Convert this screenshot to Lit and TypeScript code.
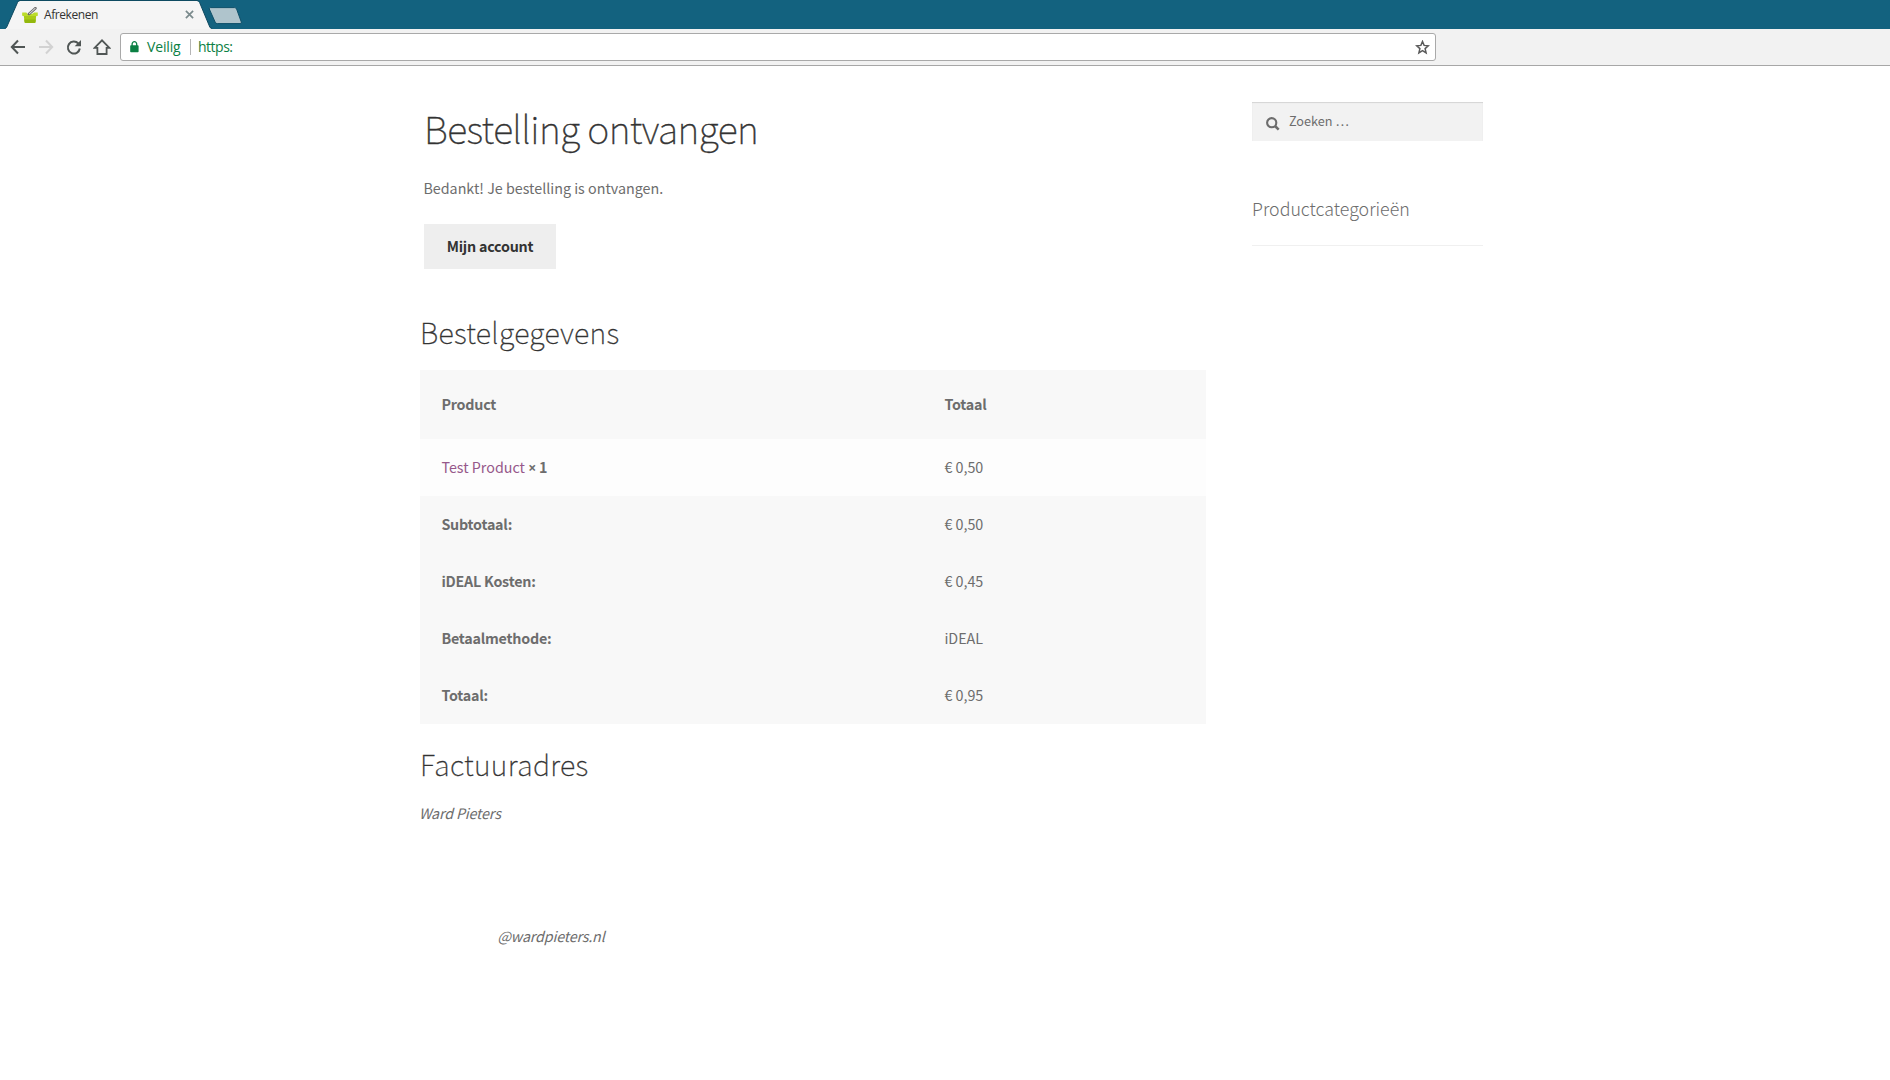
import { LitElement, html, css, svg } from "lit";
import { customElement } from "lit/decorators.js";

interface Row {
  label: string;
  value: string;
}

const TOTALS: Row[] = [
  { label: "Subtotaal:", value: "€ 0,50" },
  { label: "iDEAL Kosten:", value: "€ 0,45" },
  { label: "Betaalmethode:", value: "iDEAL" },
  { label: "Totaal:", value: "€ 0,95" },
];

const basket = svg`
  <path d="M1.600 7h12.800l-.9 8.200q-.2.8-1 .8H3.600q-.8 0-1-.8z" fill="#a9cb16"/>
  <path d="M2.200 12.400h11.600l-.3 2.800q-.2.8-1 .8H3.600q-.8 0-1-.8z" fill="#93b80d"/>
  <path d="M.2 5.400h4.200l1.400 1.800h3.800l2.600-1.600 3.500-.2.200 2.800q0 .8-.8.8H1q-.8 0-.9-.8z" fill="#bcdc2c"/>
  <path d="M7 7 13.400 1.200" stroke="#666" stroke-width="2.600" stroke-linecap="round"/>
  <path d="M7.400 6.600 13.100 1.400" stroke="#d0d0d0" stroke-width="1.100" stroke-linecap="round"/>`;

@customElement("browser-chrome")
export class BrowserChrome extends LitElement {
  static styles = css`
    :host {
      display: block;
      font-family: "Open Sans", "Noto Sans", sans-serif;
    }
    svg {
      display: block;
      flex: none;
    }
    .strip {
      display: flex;
      height: 29px;
      background: #13627f;
      box-sizing: border-box;
    }
    .tab {
      display: grid;
      width: 207px;
      height: 29px;
      margin-left: 5px;
    }
    .tab > * {
      grid-area: 1 / 1;
    }
    .tab-content {
      display: flex;
      align-items: center;
      padding: 0 18px 0 17px;
      height: 29px;
      box-sizing: border-box;
      z-index: 1;
    }
    .title {
      flex: 1;
      margin-left: 6px;
      font-size: 12px;
      line-height: 29px;
      letter-spacing: -0.42px;
      color: #333;
    }
    .new-tab {
      margin: 7px 0 0 -4px;
    }
    .toolbar {
      display: flex;
      align-items: center;
      height: 37px;
      padding: 0 0 0 9px;
      box-sizing: border-box;
      border-bottom: 1px solid #a7a7a7;
      background: #f2f2f2;
    }
    .nav {
      display: flex;
      gap: 10px;
      width: 111px;
      flex: none;
    }
    .home {
      margin-left: 1px;
    }
    .omnibox {
      display: flex;
      align-items: center;
      width: 1316px;
      height: 28px;
      box-sizing: border-box;
      border: 1px solid #a9a9a9;
      border-radius: 3px;
      background: #fff;
      padding: 0 5px 0 9px;
      font-size: 14px;
      line-height: 26px;
      color: #0b8043;
    }
    .secure {
      margin-left: 8px;
      width: 43px;
      letter-spacing: -0.15px;
    }
    .divider {
      width: 1px;
      height: 16px;
      background: #b5b5b5;
      margin-right: 7px;
    }
    .url {
      flex: 1;
      letter-spacing: -0.5px;
    }
  `;

  render() {
    return html`
      <div class="strip">
        <div class="tab">
          <svg width="207" height="29" viewBox="0 0 207 29">
            <path d="M0 29 1.500 27.500 12.500 2.500Q13 1 15 1H192Q194 1 194.600 2.500L205 27.500 207 29z" fill="#f5f5f5" />
            <path d="M0 28.500 1.500 27.500 12.500 2.500Q13 .5 15 .5H192Q194 .5 194.600 2.500L205 27.500 207 28.500" fill="none" stroke="#0e4a61" />
          </svg>
          <div class="tab-content">
            <svg width="16" height="16" viewBox="0 0 16 16">${basket}</svg>
            <span class="title">Afrekenen</span>
            <svg width="9" height="9" viewBox="0 0 9 9">
              <path d="M.9.9 8.100 8.100M8.100.9.9 8.100" stroke="#7a8a8c" stroke-width="1.700" />
            </svg>
          </div>
        </div>
        <svg class="new-tab" width="35" height="18" viewBox="0 0 35 18">
          <path d="M2.200.6H26.500Q28 .6 28.600 2L33.300 15Q33.800 16.600 32.200 16.600H9.300Q7.800 16.600 7.200 15.200L1.300 2Q.8.600 2.200.6z"
            fill="#afc4cc" stroke="#0e4f68" />
        </svg>
      </div>
      <div class="toolbar">
        <div class="nav">
          <svg width="17" height="18" viewBox="0 0 17 18">
            <path d="M9 2.500 2.800 9 9 15.500M3 9H16" fill="none" stroke="#505655" stroke-width="2" />
          </svg>
          <svg width="18" height="18" viewBox="0 0 18 18">
            <path d="M10 2.500 16.200 9 10 15.500M16 9H3" fill="none" stroke="#d2d2d2" stroke-width="2" />
          </svg>
          <svg width="18" height="18" viewBox="0 0 18 18">
            <path d="M14.300 5.500A6 6 0 1 0 15.800 10.500" fill="none" stroke="#505655" stroke-width="2" />
            <path d="M17 2V8.300H10.700z" fill="#505655" />
          </svg>
          <svg class="home" width="18" height="18" viewBox="0 0 18 18">
            <path d="M1.600 9.800 9 2.300 16.400 9.800H13.600V16H4.400V9.800z" fill="none" stroke="#505655" stroke-width="1.800" />
          </svg>
        </div>
        <div class="omnibox">
          <svg width="9" height="12" viewBox="0 0 9 12">
            <rect x=".2" y="4.300" width="8.400" height="7" rx=".8" fill="#0b8043" />
            <path d="M2.100 5V3a2.300 2.300 0 0 1 4.600 0V5" fill="none" stroke="#0b8043" stroke-width="1.300" />
          </svg>
          <span class="secure">Veilig</span>
          <span class="divider"></span>
          <span class="url">https:</span>
          <svg width="15" height="15" viewBox="0 0 15 15">
            <path d="M7.500 1.500 9.100 5.400 13.300 5.800 10.100 8.600 11.100 12.800 7.500 10.600 3.900 12.800 4.900 8.600 1.700 5.800 5.900 5.400z"
              fill="none" stroke="#5a5a5a" stroke-width="1.500" />
          </svg>
        </div>
      </div>
    `;
  }
}

@customElement("order-table")
export class OrderTable extends LitElement {
  static styles = css`
    :host {
      display: block;
    }
    .row {
      display: grid;
      grid-template-columns: 503px 1fr;
      height: 57px;
      box-sizing: border-box;
      padding-left: 21.4px;
      background: #f8f8f8;
      line-height: 56px;
    }
    .head {
      height: 69px;
      line-height: 67px;
    }
    .item {
      background: #fdfdfd;
    }
    .bold {
      font-weight: 700;
      letter-spacing: -0.22px;
    }
    .times {
      font-family: "Open Sans", sans-serif;
      font-size: 14px;
      line-height: 1;
    }
    .link {
      color: #96588a;
    }
  `;

  render() {
    return html`
      <div class="row head">
        <span class="bold">Product</span><span class="bold">Totaal</span>
      </div>
      <div class="row item">
        <span><span class="link">Test Product</span> <span class="bold"><span class="times">×</span> 1</span></span>
        <span>€ 0,50</span>
      </div>
      ${TOTALS.map(
        (r) => html`<div class="row">
          <span class="bold">${r.label}</span><span>${r.value}</span>
        </div>`
      )}
    `;
  }
}

@customElement("app-root")
export class AppRoot extends LitElement {
  static styles = css`
    :host {
      display: block;
      height: 1080px;
      overflow: hidden;
      background: #fff;
      color: #6d6d6d;
      font-family: "Noto Sans CJK JP", sans-serif;
      font-size: 14.3px;
    }
    .page {
      display: flex;
      padding-left: 420px;
    }
    .main {
      width: 786px;
      margin-right: 46px;
      padding-top: 34px;
    }
    .intro {
      padding-left: 4px;
    }
    h1,
    h2,
    h3,
    p {
      margin: 0;
      font-weight: 100;
      white-space: nowrap;
    }
    h1 {
      font-size: 37.5px;
      line-height: 56px;
      letter-spacing: -0.54px;
      color: #333;
      -webkit-text-stroke: 0.4px #333;
    }
    p {
      font-weight: 400;
      line-height: 26px;
      margin: 19px 0 0 -0.6px;
    }
    .button {
      display: inline-block;
      height: 45px;
      width: 132px;
      margin-top: 23px;
      background: #eee;
      color: #333;
      font-weight: 700;
      letter-spacing: -0.22px;
      line-height: 44px;
      text-align: center;
    }
    h2 {
      font-size: 28.7px;
      line-height: 40px;
      letter-spacing: 0.33px;
      color: #333;
      -webkit-text-stroke: 0.35px #333;
    }
    .order-title {
      margin: 43px 0 18px;
    }
    .address-title {
      margin-top: 20px;
    }
    address {
      display: flex;
      flex-direction: column;
      gap: 97px;
      margin: 16px 0 0 -1px;
      line-height: 26px;
      letter-spacing: -0.18px;
    }
    .mail {
      padding-left: 78.5px;
    }
    .side {
      width: 231px;
      padding-top: 36px;
    }
    .search {
      display: flex;
      align-items: center;
      gap: 9px;
      height: 39px;
      box-sizing: border-box;
      padding-left: 14px;
      background: #f2f2f2;
      box-shadow: inset 0 1px 1px rgba(0, 0, 0, 0.125);
      font-size: 12.7px;
    }
    .search span {
      line-height: 37px;
      height: 39px;
    }
    .search svg {
      display: block;
      margin-top: 4px;
    }
    h3 {
      margin-top: 52px;
      padding-bottom: 22px;
      border-bottom: 1px solid #f0f0f0;
      font-weight: 300;
      font-size: 17.8px;
      line-height: 30px;
    }
  `;

  render() {
    return html`
      <browser-chrome></browser-chrome>
      <div class="page">
        <main class="main">
          <section class="intro">
            <h1>Bestelling ontvangen</h1>
            <p>Bedankt! Je bestelling is ontvangen.</p>
            <a class="button">Mijn account</a>
          </section>
          <h2 class="order-title">Bestelgegevens</h2>
          <order-table></order-table>
          <h2 class="address-title">Factuuradres</h2>
          <address>
            <span>Ward Pieters</span>
            <span class="mail">@wardpieters.nl</span>
          </address>
        </main>
        <aside class="side">
          <div class="search">
            <svg width="14" height="14" viewBox="0 0 14 14">
              <circle cx="5.700" cy="5.700" r="4.600" fill="none" stroke="#6d6d6d" stroke-width="2.100" />
              <path d="M9 9 12.700 12.700" stroke="#6d6d6d" stroke-width="2.500" />
            </svg>
            <span>Zoeken …</span>
          </div>
          <h3>Productcategorieën</h3>
        </aside>
      </div>
    `;
  }
}
